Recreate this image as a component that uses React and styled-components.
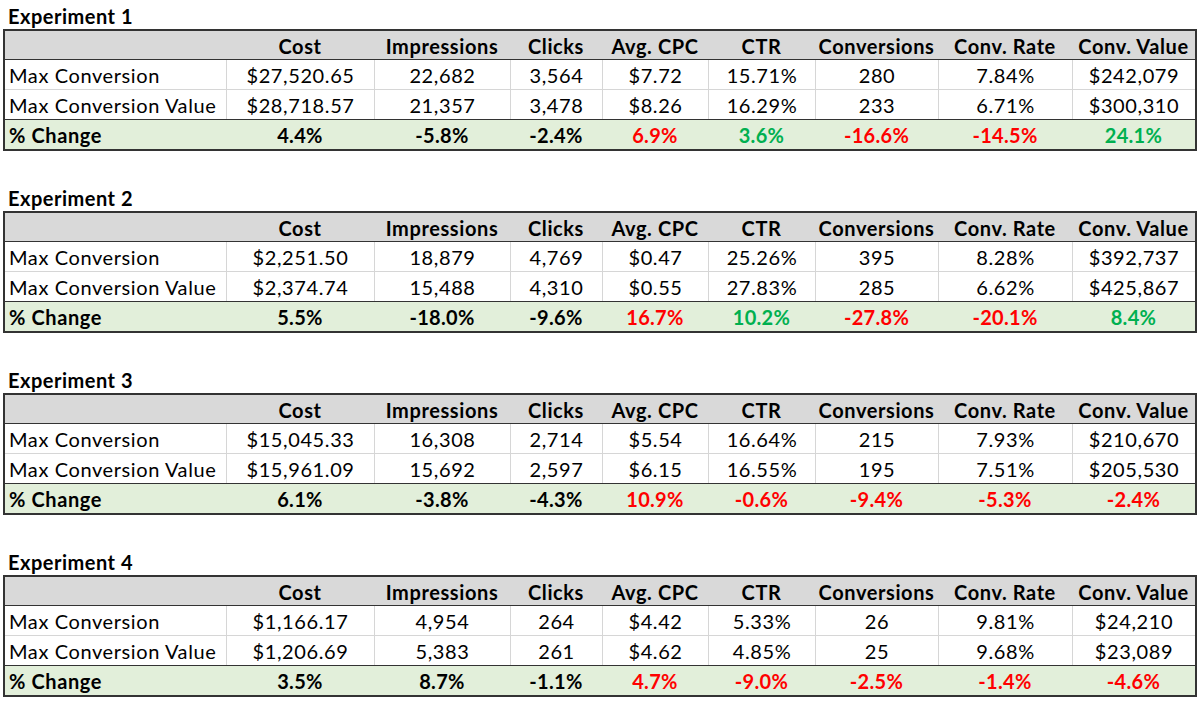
import React from "react";
import styled, { createGlobalStyle } from "styled-components";

const GlobalStyle = createGlobalStyle`
  html, body { margin: 0; padding: 0; background: #ffffff; }
  body { font-family: Lato, "Open Sans", sans-serif; color: #000; }
  * { box-sizing: border-box; }
`;

const COLS = "221px 148px 136px 92px 106px 107px 123px 134px 123px";

const Page = styled.div`
  width: 1200px;
  height: 702px;
  overflow: hidden;
  padding: 4px 3px 0 3px;
  display: flex;
  flex-direction: column;
  gap: 35px;
`;

const Section = styled.section`
  display: flex;
  flex-direction: column;
`;

const Title = styled.h2`
  margin: 0 0 1px 0;
  padding-left: 5px;
  height: 24px;
  font-size: 20px;
  letter-spacing: 0.5px;
  line-height: 24px;
  font-weight: 700;
  color: #000;
`;

const Table = styled.div`
  width: 1194px;
  border: 2px solid #333333;
  display: flex;
  flex-direction: column;
`;

const Row = styled.div`
  display: grid;
  grid-template-columns: ${COLS};
  height: ${(p) => p.$h}px;
  background: ${(p) => p.$bg || "#ffffff"};
  border-bottom: ${(p) => (p.$line ? `1px solid ${p.$line}` : "none")};
  font-weight: ${(p) => (p.$bold ? 700 : 400)};
`;

const Cell = styled.div`
  font-size: 20px;
  letter-spacing: ${(p) => (p.$tight ? "0.3px" : "0.6px")};
  line-height: 28px;
  padding-top: 1px;
  white-space: nowrap;
  text-align: ${(p) => (p.$left ? "left" : "center")};
  padding-left: ${(p) => (p.$left ? "4px" : "0")};
  border-left: ${(p) => (p.$grid && !p.$left ? "1px solid #d6d6d6" : "none")};
  color: ${(p) =>
    p.$tone === "r" ? "#ff0000" : p.$tone === "g" ? "#00b050" : "#000000"};
`;

const HEAD = [
  "",
  "Cost",
  "Impressions",
  "Clicks",
  "Avg. CPC",
  "CTR",
  "Conversions",
  "Conv. Rate",
  "Conv. Value",
];

const DATA = [
  {
    title: "Experiment 1",
    rows: [
      ["Max Conversion", "$27,520.65", "22,682", "3,564", "$7.72", "15.71%", "280", "7.84%", "$242,079"],
      ["Max Conversion Value", "$28,718.57", "21,357", "3,478", "$8.26", "16.29%", "233", "6.71%", "$300,310"],
    ],
    change: [["4.4%", "k"], ["-5.8%", "k"], ["-2.4%", "k"], ["6.9%", "r"], ["3.6%", "g"], ["-16.6%", "r"], ["-14.5%", "r"], ["24.1%", "g"]],
  },
  {
    title: "Experiment 2",
    rows: [
      ["Max Conversion", "$2,251.50", "18,879", "4,769", "$0.47", "25.26%", "395", "8.28%", "$392,737"],
      ["Max Conversion Value", "$2,374.74", "15,488", "4,310", "$0.55", "27.83%", "285", "6.62%", "$425,867"],
    ],
    change: [["5.5%", "k"], ["-18.0%", "k"], ["-9.6%", "k"], ["16.7%", "r"], ["10.2%", "g"], ["-27.8%", "r"], ["-20.1%", "r"], ["8.4%", "g"]],
  },
  {
    title: "Experiment 3",
    rows: [
      ["Max Conversion", "$15,045.33", "16,308", "2,714", "$5.54", "16.64%", "215", "7.93%", "$210,670"],
      ["Max Conversion Value", "$15,961.09", "15,692", "2,597", "$6.15", "16.55%", "195", "7.51%", "$205,530"],
    ],
    change: [["6.1%", "k"], ["-3.8%", "k"], ["-4.3%", "k"], ["10.9%", "r"], ["-0.6%", "r"], ["-9.4%", "r"], ["-5.3%", "r"], ["-2.4%", "r"]],
  },
  {
    title: "Experiment 4",
    rows: [
      ["Max Conversion", "$1,166.17", "4,954", "264", "$4.42", "5.33%", "26", "9.81%", "$24,210"],
      ["Max Conversion Value", "$1,206.69", "5,383", "261", "$4.62", "4.85%", "25", "9.68%", "$23,089"],
    ],
    change: [["3.5%", "k"], ["8.7%", "k"], ["-1.1%", "k"], ["4.7%", "r"], ["-9.0%", "r"], ["-2.5%", "r"], ["-1.4%", "r"], ["-4.6%", "r"]],
  },
];

function ExperimentTable({ exp }) {
  return (
    <Section>
      <Title>{exp.title}</Title>
      <Table>
        <Row $h={29} $bg="#d9d9d9" $line="#333333" $bold>
          {HEAD.map((h, i) => (
            <Cell key={i} $left={i === 0}>
              {h}
            </Cell>
          ))}
        </Row>
        {exp.rows.map((r, ri) => (
          <Row key={ri} $h={30} $line={ri === exp.rows.length - 1 ? "#333333" : "#d6d6d6"}>
            {r.map((v, i) => (
              <Cell key={i} $left={i === 0} $grid>
                {v}
              </Cell>
            ))}
          </Row>
        ))}
        <Row $h={29} $bg="#e2efda" $bold>
          <Cell $left>% Change</Cell>
          {exp.change.map(([v, t], i) => (
            <Cell key={i} $tone={t} $tight>
              {v}
            </Cell>
          ))}
        </Row>
      </Table>
    </Section>
  );
}

export default function App() {
  return (
    <>
      <GlobalStyle />
      <Page>
        {DATA.map((exp) => (
          <ExperimentTable key={exp.title} exp={exp} />
        ))}
      </Page>
    </>
  );
}
